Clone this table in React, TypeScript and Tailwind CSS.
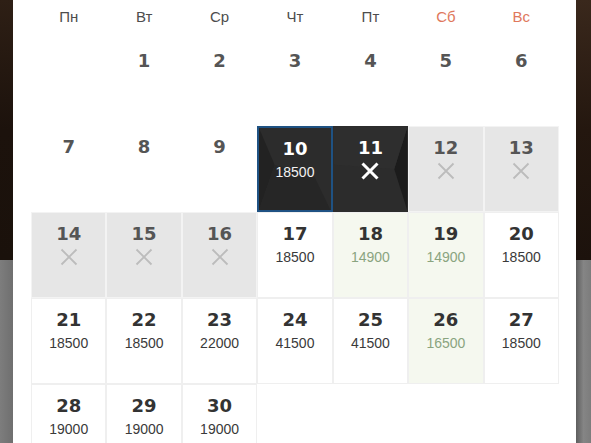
type Day = {
  d: number
  kind: 'past' | 'off' | 'open' | 'cheap' | 'sel' | 'selOff'
  price?: string
}

const days: (Day | null)[] = [
  null,
  { d: 1, kind: 'past' },
  { d: 2, kind: 'past' },
  { d: 3, kind: 'past' },
  { d: 4, kind: 'past' },
  { d: 5, kind: 'past' },
  { d: 6, kind: 'past' },
  { d: 7, kind: 'past' },
  { d: 8, kind: 'past' },
  { d: 9, kind: 'past' },
  { d: 10, kind: 'sel', price: '18500' },
  { d: 11, kind: 'selOff' },
  { d: 12, kind: 'off' },
  { d: 13, kind: 'off' },
  { d: 14, kind: 'off' },
  { d: 15, kind: 'off' },
  { d: 16, kind: 'off' },
  { d: 17, kind: 'open', price: '18500' },
  { d: 18, kind: 'cheap', price: '14900' },
  { d: 19, kind: 'cheap', price: '14900' },
  { d: 20, kind: 'open', price: '18500' },
  { d: 21, kind: 'open', price: '18500' },
  { d: 22, kind: 'open', price: '18500' },
  { d: 23, kind: 'open', price: '22000' },
  { d: 24, kind: 'open', price: '41500' },
  { d: 25, kind: 'open', price: '41500' },
  { d: 26, kind: 'cheap', price: '16500' },
  { d: 27, kind: 'open', price: '18500' },
  { d: 28, kind: 'open', price: '19000' },
  { d: 29, kind: 'open', price: '19000' },
  { d: 30, kind: 'open', price: '19000' },
  null,
  null,
  null,
  null,
]

const weekdays = ['Пн', 'Вт', 'Ср', 'Чт', 'Пт', 'Сб', 'Вс']

const numFont = { fontFamily: '"DejaVu Sans", Verdana, sans-serif' }
const textFont = { fontFamily: '"Liberation Sans", Arial, sans-serif' }

// cross mark drawn for sold-out days
function Cross({ color, width }: { color: string; width: number }) {
  return (
    <svg className="relative mt-[3px] h-[18px] w-[18px]" viewBox="0 0 18 18">
      <path d="M1.5 1.5 L16.5 16.5 M16.5 1.5 L1.5 16.5" stroke={color} strokeWidth={width} strokeLinecap="butt" />
    </svg>
  )
}

function Cell({ day }: { day: Day | null }) {
  if (!day) return <div className="h-[86px]" />

  const base = 'relative flex h-[86px] flex-col items-center pt-[10px]'

  if (day.kind === 'past') {
    return (
      <div className={base}>
        <span className="text-[18px] font-bold leading-[22px] text-[#555]" style={numFont}>
          {day.d}
        </span>
      </div>
    )
  }

  if (day.kind === 'off') {
    return (
      <div className={`${base} border border-[#f3f3f3] bg-[#e6e6e6]`}>
        <span className="text-[18px] font-bold leading-[22px] text-[#555]" style={numFont}>
          {day.d}
        </span>
        <Cross color="#bcbcbc" width={1.8} />
      </div>
    )
  }

  if (day.kind === 'sel' || day.kind === 'selOff') {
    const isSel = day.kind === 'sel'
    return (
      <div
        className={`${base} overflow-hidden bg-[#2c2c2c] ${
          isSel ? 'border-2 border-[#1f5283] pt-[8px]' : 'border border-[#2c2c2c] pt-[9px]'
        }`}
      >
        <svg className="absolute inset-0 h-full w-full" viewBox="0 0 100 100" preserveAspectRatio="none">
          {isSel ? (
            <>
              <polygon points="0,0 22,45 0,100" fill="#222" />
              <polygon points="0,100 22,45 78,60 100,100" fill="#262626" />
            </>
          ) : (
            <>
              <polygon points="100,0 82,50 100,100" fill="#1b1b1b" />
              <polygon points="0,0 100,0 82,50 0,45" fill="#2e2e2e" />
            </>
          )}
        </svg>
        <span className="relative text-[18px] font-bold leading-[22px] text-white" style={numFont}>
          {day.d}
        </span>
        {isSel ? (
          <span className="relative mt-[4px] text-[14px] leading-[16px] text-[#f2f2f2]" style={textFont}>
            {day.price}
          </span>
        ) : (
          <Cross color="#ffffff" width={3} />
        )}
      </div>
    )
  }

  const cheap = day.kind === 'cheap'
  return (
    <div className={`${base} border border-[#efefef] ${cheap ? 'bg-[#f5f8ef]' : 'bg-white'}`}>
      <span className="text-[18px] font-bold leading-[22px] text-[#333]" style={numFont}>
        {day.d}
      </span>
      <span
        className={`mt-[4px] text-[14px] leading-[16px] ${cheap ? 'text-[#8aa47f]' : 'text-[#3a3a3a]'}`}
        style={textFont}
      >
        {day.price}
      </span>
    </div>
  )
}

export default function App() {
  return (
    <div className="flex h-[443px] w-[591px] overflow-hidden bg-[#7a7a7a]">
      <div className="flex w-[13px] flex-col">
        <div className="h-[260px] bg-gradient-to-b from-[#2e1f15] via-[#1c120c] to-[#1a110b]" />
        <div className="flex-1 bg-gradient-to-r from-[#7d7d7d] to-[#6f6f6f]" />
      </div>

      <div className="flex-1 bg-white pl-[18px] pr-[17px]">
        <div className="grid h-[40px] grid-cols-7 pt-[7px]">
          {weekdays.map((w, i) => (
            <div
              key={w}
              className={`text-center text-[15px] leading-[20px] ${i > 4 ? 'text-[#e0785c]' : 'text-[#4d4d4d]'}`}
              style={textFont}
            >
              {w}
            </div>
          ))}
        </div>
        <div className="grid grid-cols-7">
          {days.map((day, i) => (
            <Cell key={i} day={day} />
          ))}
        </div>
      </div>

      <div className="flex w-[15px] flex-col">
        <div className="h-[260px] bg-gradient-to-b from-[#3a281c] via-[#24170f] to-[#1c120c]" />
        <div className="flex-1 bg-gradient-to-r from-[#5e5e5e] via-[#858585] to-[#7c7c7c]" />
      </div>
    </div>
  )
}
